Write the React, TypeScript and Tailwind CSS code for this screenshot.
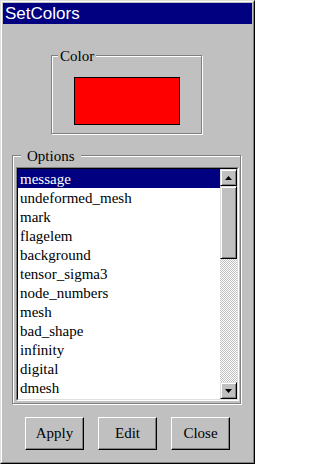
import React from 'react';

const options = [
  'message',
  'undeformed_mesh',
  'mark',
  'flagelem',
  'background',
  'tensor_sigma3',
  'node_numbers',
  'mesh',
  'bad_shape',
  'infinity',
  'digital',
  'dmesh',
];

function Arrow({ down }: { down?: boolean }) {
  return (
    <svg width="7" height="4" viewBox="0 0 7 4">
      <polygon points={down ? '0,0 7,0 3.5,4' : '0,4 7,4 3.5,0'} fill="#000" />
    </svg>
  );
}

function ScrollButton({ down }: { down?: boolean }) {
  return (
    <div className="h-[17px] w-[17px] bg-[#c0c0c0] border border-t-[#dfdfdf] border-l-[#dfdfdf] border-r-black border-b-black shadow-[inset_1px_1px_0_#fff,inset_-1px_-1px_0_#808080] flex items-center justify-center">
      <Arrow down={down} />
    </div>
  );
}

function DialogButton({ label }: { label: string }) {
  return (
    <button className="h-[33px] w-[59px] bg-[#c0c0c0] border border-t-white border-l-white border-r-black border-b-black shadow-[inset_-1px_-1px_0_#808080] text-[15px] leading-[17px] text-black font-[family-name:Liberation_Serif,serif]">
      {label}
    </button>
  );
}

export default function App() {
  return (
    <div className="w-[255px] h-[464px] bg-[#c0c0c0] border border-t-[#dfdfdf] border-l-[#dfdfdf] border-r-black border-b-black font-[family-name:Liberation_Serif,serif]">
      <div className="h-full border border-t-white border-l-white border-r-[#808080] border-b-[#808080] p-[1px] flex flex-col">
        {/* Title bar */}
        <div className="h-[21px] bg-[#000080] pl-[2px] text-white text-[17px] leading-[21px] font-[family-name:Liberation_Sans,sans-serif]">
          SetColors
        </div>

        {/* Color group */}
        <div className="relative ml-[48px] mt-[31px] w-[151px] h-[79px] border border-[#808080] shadow-[inset_1px_1px_0_#fff,1px_1px_0_#fff] pl-[22px] pt-[21px]">
          <span className="absolute -top-[9px] left-[6px] px-[2px] bg-[#c0c0c0] text-[15px] leading-[18px]">
            Color
          </span>
          <div className="w-[106px] h-[48px] bg-[#ff0000] border border-black" />
        </div>

        {/* Options group */}
        <div className="relative ml-[9px] mt-[21px] w-[229px] h-[249px] border border-[#808080] shadow-[inset_1px_1px_0_#fff,1px_1px_0_#fff] pl-[3px] pt-[11px]">
          <span className="absolute -top-[9px] left-[8px] px-[6px] bg-[#c0c0c0] text-[15px] leading-[18px]">
            Options
          </span>
          <div className="w-[223px] h-[234px] border border-t-[#808080] border-l-[#808080] border-r-white border-b-white">
            <div className="h-full border border-t-black border-l-black border-r-[#dfdfdf] border-b-[#dfdfdf] bg-white flex">
              <div className="flex-1 overflow-hidden">
                {options.map((o, i) => (
                  <div
                    key={o}
                    className={
                      i === 0
                        ? 'h-[19px] pl-[2px] pt-[1px] text-[15px] leading-[19px] bg-[#000080] text-white'
                        : 'h-[19px] pl-[2px] pt-[1px] text-[15px] leading-[19px] text-black'
                    }
                  >
                    {o}
                  </div>
                ))}
              </div>
              {/* Scrollbar */}
              <div className="w-[17px] flex flex-col">
                <ScrollButton />
                <div className="h-[73px] bg-[#c0c0c0] border border-t-[#dfdfdf] border-l-[#dfdfdf] border-r-black border-b-black shadow-[inset_1px_1px_0_#fff,inset_-1px_-1px_0_#808080]" />
                <div className="flex-1 bg-[repeating-conic-gradient(#c0c0c0_0%_25%,#ffffff_0%_50%)] bg-[length:2px_2px]" />
                <ScrollButton down />
              </div>
            </div>
          </div>
        </div>

        {/* Buttons */}
        <div className="ml-[22px] mt-[13px] flex gap-[14px]">
          <DialogButton label="Apply" />
          <DialogButton label="Edit" />
          <DialogButton label="Close" />
        </div>
      </div>
    </div>
  );
}
